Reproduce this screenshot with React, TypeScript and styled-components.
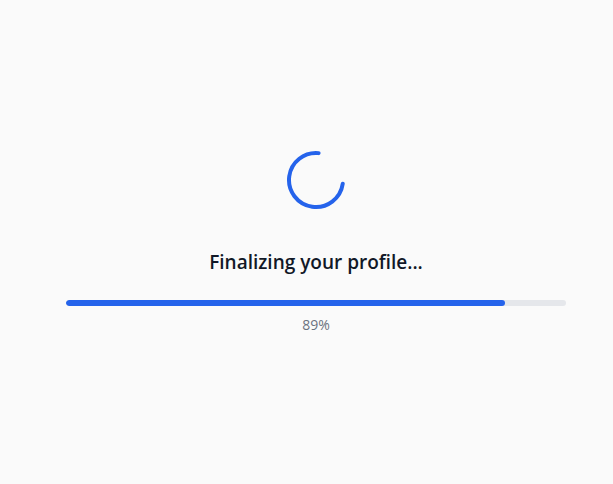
import React from 'react';
import styled, { createGlobalStyle, keyframes } from 'styled-components';

const GlobalStyle = createGlobalStyle`
  html, body {
    margin: 0;
    padding: 0;
    background: #fafafa;
    font-family: "Open Sans", "Noto Sans", sans-serif;
  }
`;

const spin = keyframes`
  from { transform: rotate(0deg); }
  to { transform: rotate(360deg); }
`;

const Screen = styled.main`
  min-height: 100vh;
  box-sizing: border-box;
  padding-left: 19px;
  display: flex;
  align-items: center;
  justify-content: center;
`;

const Content = styled.section`
  width: 500px;
  display: flex;
  flex-direction: column;
  align-items: center;
`;

const SpinnerSvg = styled.svg`
  width: 60px;
  height: 60px;
  display: block;
  animation: ${spin} 1s linear infinite;
  animation-play-state: paused;
`;

const Title = styled.h2`
  margin: 38px 0 0;
  font-size: 19px;
  line-height: 28px;
  font-weight: 600;
  color: #111827;
`;

const Track = styled.div`
  width: 100%;
  height: 6px;
  margin-top: 24px;
  border-radius: 9999px;
  background: #e5e7eb;
  overflow: hidden;
`;

const Fill = styled.div`
  height: 100%;
  border-radius: 9999px;
  background: #2563eb;
`;

const Percent = styled.p`
  margin: 9px 0 0;
  font-size: 14px;
  line-height: 20px;
  font-weight: 500;
  color: #6b7280;
`;

const Spinner = () => {
  const r = 27;
  const c = 2 * Math.PI * r;
  return (
    <SpinnerSvg viewBox="0 0 60 60" fill="none">
      <circle
        cx="30"
        cy="30"
        r={r}
        stroke="#2563eb"
        strokeWidth="4"
        strokeLinecap="round"
        strokeDasharray={`${c * 0.74} ${c}`}
        transform="rotate(8 30 30)"
      />
    </SpinnerSvg>
  );
};

export default function App() {
  const progress = 89;
  const barWidth = 87.8;
  return (
    <>
      <GlobalStyle />
      <Screen>
        <Content>
          <Spinner />
          <Title>Finalizing your profile...</Title>
          <Track>
            <Fill style={{ width: `${barWidth}%` }} />
          </Track>
          <Percent>{progress}%</Percent>
        </Content>
      </Screen>
    </>
  );
}
